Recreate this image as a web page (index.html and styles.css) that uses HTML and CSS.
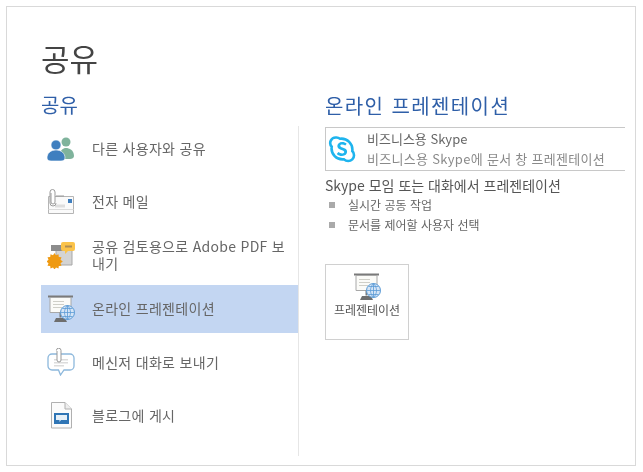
FILE: index.html
```html
<!DOCTYPE html>
<html lang="ko">

<head>
    <meta charset="UTF-8">
    <meta name="viewport" content="width=device-width, initial-scale=1.0">
    <title>공유</title>
    <link rel="stylesheet" href="styles.css">
</head>

<body>
    <svg class="defs" width="0" height="0">
        <symbol id="present" viewBox="0 0 28 28">
            <path d="M1 1.500h25" stroke="#7a7a7a" stroke-width="2" fill="none"/>
            <path d="M3 2.500h21v15H3z" fill="#fbfbf8" stroke="#a8a8a8"/>
            <path d="M6 6.500h11M6 9.500h11M6 12.500h9" stroke="#cfcfc8" fill="none"/>
            <path d="M13.500 17.500v5" stroke="#7a7a7a" stroke-width="2" fill="none"/>
            <path d="M7 27l2-4h9l2 4z" fill="#6e6e6e"/>
            <circle cx="20.500" cy="17.500" r="7" fill="#d5e5f6" stroke="#5b9bd5"/>
            <path d="M13.500 17.500h14M20.500 10.500v14M15.500 13.500h10M15.500 21.500h10M20.500 10.500c-4 4-4 10 0 14M20.500 10.500c4 4 4 10 0 14" stroke="#5b9bd5" stroke-width=".8" fill="none"/>
        </symbol>
    </svg>
    <div class="frame">
        <h1>공유</h1>
        <div class="columns">
            <div class="left">
                <h2>공유</h2>
                <ul class="menu">
                    <li class="item">
                        <svg class="icon" viewBox="0 0 28 28">
                            <circle cx="19" cy="7" r="4.500" fill="#7fb39c"/>
                            <path d="M13 21c0-6 3-8 6-8s8 2 8 8c0 2-2 3-4 3h-6c-3 0-4-1-4-3z" fill="#7fb39c"/>
                            <circle cx="9" cy="10" r="5" fill="#3f7fbf" stroke="#fff" stroke-width=".6"/>
                            <path d="M0 23c0-5 4-8 9-8s9 3 9 8c0 2-2 3-4 3H4c-2 0-4-1-4-3z" fill="#3f7fbf" stroke="#fff" stroke-width=".6"/>
                        </svg>
                        <span>다른 사용자와 공유</span>
                    </li>
                    <li class="item">
                        <svg class="icon" viewBox="0 0 28 28">
                            <path d="M1.500 8.500h25v17h-25z" fill="#fafafa" stroke="#b5b5b5"/>
                            <path d="M1.500 21.500h25" stroke="#dcdcdc" fill="none"/>
                            <path d="M8 16.500h10v3H8z" fill="#dedede"/>
                            <path d="M21 11h4v4h-4z" fill="#3f7fbf"/>
                            <path d="M9 8h8" stroke="#9a9a9a" fill="none"/>
                            <path d="M4 5v9a2 2 0 0 0 4 0V4a2.500 2.500 0 0 0-5 0v11a3 3 0 0 0 6 0" fill="#fff" stroke="#9a9a9a"/>
                        </svg>
                        <span>전자 메일</span>
                    </li>
                    <li class="item">
                        <svg class="icon" viewBox="0 0 28 28">
                            <path d="M9 5h16v19H9z" fill="#d4d4d4" stroke="#a8a8a8"/>
                            <path d="M4 4h13v6H4z" fill="#8c8c8c"/>
                            <path d="M16 1h10a2 2 0 0 1 2 2v5a2 2 0 0 1-2 2h-5l-3 3v-3h-2a2 2 0 0 1-2-2V3a2 2 0 0 1 2-2z" fill="#fbc34a"/>
                            <path d="M18 4.500h7v2h-7z" fill="#b08d52"/>
                            <path d="M7.500 12l1.500 2.300 2.500-1 .3 2.700 2.700.3-1 2.500 2.300 1.700-2.300 1.700 1 2.500-2.700.3-.3 2.500-2.500-1-1.500 2-1.500-2-2.500 1-.3-2.500-2.700-.3 1-2.500-2.300-1.700 2.300-1.700-1-2.500 2.700-.3.3-2.700 2.500 1z" fill="#ef9a12"/>
                        </svg>
                        <span>공유 검토용으로 Adobe PDF 보내기</span>
                    </li>
                    <li class="item item-active">
                        <svg class="icon"><use href="#present"/></svg>
                        <span>온라인 프레젠테이션</span>
                    </li>
                    <li class="item">
                        <svg class="icon" viewBox="0 0 28 28">
                            <path d="M5 6h18a4 4 0 0 1 4 4v8a4 4 0 0 1-4 4h-6l-3.500 5-2-5H5a4 4 0 0 1-4-4v-8a4 4 0 0 1 4-4z" fill="#fff" stroke="#8db8dc" stroke-width="1.300"/>
                            <path d="M7 11h14v1.500H7zM7 14h14v1.500H7zM7 17h10v1.500H7z" fill="#dcdcdc"/>
                            <path d="M10 3v9a2 2 0 0 0 4 0V2.500a2.300 2.300 0 0 0-4.600 0" fill="#fff" stroke="#999"/>
                        </svg>
                        <span>메신저 대화로 보내기</span>
                    </li>
                    <li class="item">
                        <svg class="icon" viewBox="0 0 28 28">
                            <path d="M4.500 1.500H18l6.500 6.500v19h-20z" fill="#fbfbfb" stroke="#b0b0b0"/>
                            <path d="M18 1.500V8h6.500" fill="#eee" stroke="#b0b0b0"/>
                            <path d="M7 12h15v11H7z" fill="#2f75b5"/>
                            <path d="M9 14h11v5h-6l-1.500 2v-2H9z" fill="#e6f0f8"/>
                        </svg>
                        <span>블로그에 게시</span>
                    </li>
                </ul>
            </div>
            <div class="right">
                <h2>온라인 프레젠테이션</h2>
                <div class="skype-box">
                    <svg class="skype-logo" viewBox="0 0 28 28">
                        <path d="M8 2.500a5.500 5.500 0 0 1 4 1.200 11 11 0 0 1 12.300 12.300 5.500 5.500 0 0 1-8.300 8.300A11 11 0 0 1 3.700 11.700 5.500 5.500 0 0 1 8 2.500z" fill="#fff" stroke="#1eb4ee" stroke-width="2.600"/>
                        <text x="14" y="20.500" class="skype-s">S</text>
                    </svg>
                    <div class="skype-text">
                        <div>비즈니스용 Skype</div>
                        <div class="skype-sub">비즈니스용 Skype에 문서 창 프레젠테이션</div>
                    </div>
                </div>
                <p class="lead">Skype 모임 또는 대화에서 프레젠테이션</p>
                <ul class="bullets">
                    <li>실시간 공동 작업</li>
                    <li>문서를 제어할 사용자 선택</li>
                </ul>
                <button class="present-btn">
                    <svg class="present-icon"><use href="#present"/></svg>
                    <span>프레젠테이션</span>
                </button>
            </div>
        </div>
    </div>
</body>
</html>
```

FILE: styles.css
```css
body {
    font-family: "Noto Sans CJK KR", "Noto Sans", sans-serif;
    margin: 0;
    padding: 6px 7px 6px 6px;
    background-color: #fff;
    color: #666;
}
ul {
    list-style: none;
    margin: 0;
    padding: 0;
}
.defs {
    position: absolute;
}
.frame {
    height: 460px;
    box-sizing: border-box;
    padding: 29px 9px 9px 34px;
    border: 1px solid #d9d9d9;
    filter: blur(0.4px);
}
h1 {
    margin: 0 0 10px;
    font-size: 31px;
    font-weight: 400;
    line-height: 44px;
    color: #444;
}
h2 {
    margin: 0;
    font-size: 20px;
    font-weight: 400;
    line-height: 30px;
    color: #2f5fa8;
}
.columns {
    display: flex;
}
.left {
    width: 258px;
}
.menu {
    height: 330px;
    margin-top: 6px;
    border-right: 1px solid #e6e6e6;
    display: flex;
    flex-direction: column;
    gap: 5.400px;
}
.item {
    height: 48px;
    display: flex;
    align-items: center;
    gap: 17px;
    padding: 0 12px 0 6px;
    font-size: 14px;
    letter-spacing: 0.3px;
    line-height: 17px;
}
.item:first-child {
    margin-top: -1.500px;
}
.item-active {
    background: #c3d6f2;
}
.icon {
    flex: none;
    width: 28px;
    height: 28px;
}
.right {
    flex: 1;
    padding-left: 26px;
    margin-top: -2px;
}
.right h2 {
    line-height: 36px;
    letter-spacing: 1.4px;
}
.skype-box {
    display: flex;
    gap: 11px;
    margin-top: 3px;
    height: 44px;
    box-sizing: border-box;
    padding-left: 2px;
    margin-right: 1px;
    border: 1px solid #c8c8c8;
    border-right: none;
    align-items: center;
}
.skype-logo {
    flex: none;
    width: 28px;
    height: 28px;
}
.skype-s {
    font-size: 19px;
    font-weight: 700;
    fill: #1eb4ee;
    text-anchor: middle;
}
.skype-text {
    font-size: 13px;
    line-height: 20px;
}
.skype-sub {
    color: #8a8a8a;
    letter-spacing: 0.3px;
}
.lead {
    margin: 4px 0 0;
    font-size: 14px;
    line-height: 20px;
    color: #555;
}
.bullets {
    margin-top: 0;
    font-size: 12px;
    line-height: 20px;
}
.bullets li {
    position: relative;
    padding-left: 23px;
}
.bullets li::before {
    content: "";
    position: absolute;
    left: 4px;
    top: 7px;
    width: 6px;
    height: 6px;
    background: #aaa;
}
.present-btn {
    display: flex;
    flex-direction: column;
    align-items: center;
    width: 84px;
    height: 76px;
    margin-top: 29px;
    padding: 8px 0 0;
    background: #fff;
    border: 1px solid #d0d0d0;
    font-family: inherit;
    font-size: 12px;
    line-height: 18px;
    color: #555;
}
.present-icon {
    width: 28px;
    height: 28px;
}
```
